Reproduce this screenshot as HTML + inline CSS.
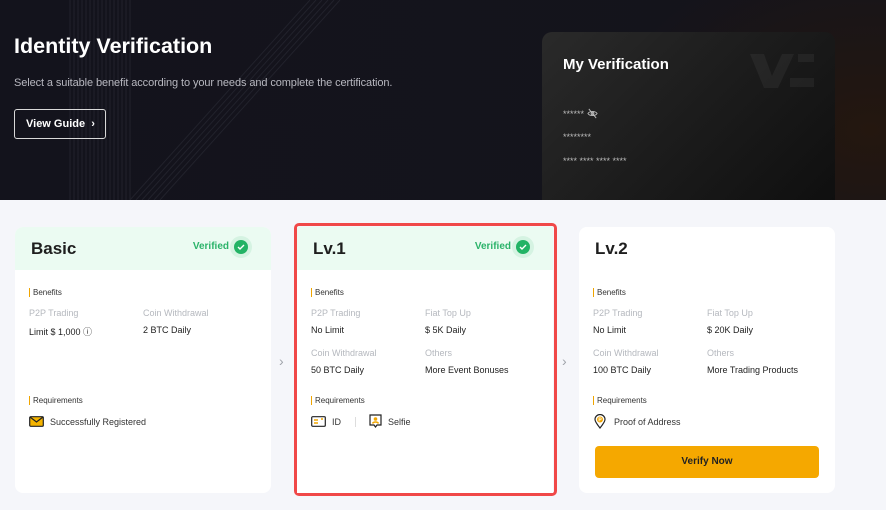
<!DOCTYPE html>
<html><head><meta charset="utf-8"><style>
*{margin:0;padding:0;box-sizing:border-box}
body{width:886px;height:510px;overflow:hidden;background:#f5f6fa;font-family:"Liberation Sans",sans-serif;position:relative}
.hdr{position:absolute;left:0;top:0;width:886px;height:200px;background:radial-gradient(ellipse 260px 180px at 870px 130px,#24170f 0%,rgba(20,18,24,0) 100%),linear-gradient(90deg,#13131c,#15141b);overflow:hidden}
.a{position:absolute}
.card{position:absolute;top:227px;width:256px;height:266px;background:#fff;border-radius:8px;overflow:hidden}
.top{height:43px;background:#ebfbf2;position:relative}
.top.w{background:#fff}
.ttl{position:absolute;left:16px;top:12px;font-size:17px;font-weight:bold;color:#1e1e1e}
.ver{position:absolute;right:42px;top:14px;font-size:10px;font-weight:bold;color:#2bb36a;white-space:nowrap}
.chk{position:absolute;right:19px;top:9px;width:22px;height:22px;border-radius:50%;background:#d5f3e2}
.chk:after{content:"";position:absolute;left:4px;top:4px;width:14px;height:14px;border-radius:50%;background:#22b365}
.chk svg{position:absolute;left:7px;top:8px;z-index:2}
.lab{position:absolute;font-size:8px;color:#333;border-left:1px solid #f0a500;padding-left:3px;line-height:9px}
.k{position:absolute;font-size:9px;color:#b5b8be}
.v{position:absolute;font-size:9px;color:#222}
.arr{position:absolute;top:353px;color:#a0a3aa;font-size:14px}
</style></head><body>
<div class="hdr">
 <svg class="a" style="left:0;top:0" width="886" height="200"><g stroke="#22222c" stroke-width="1">
 <line x1="70" y1="0" x2="70" y2="200"/><line x1="74" y1="0" x2="74" y2="200"/><line x1="78" y1="0" x2="78" y2="200"/><line x1="82" y1="0" x2="82" y2="200"/><line x1="86" y1="0" x2="86" y2="200"/><line x1="90" y1="0" x2="90" y2="200"/><line x1="94" y1="0" x2="94" y2="200"/><line x1="98" y1="0" x2="98" y2="200"/><line x1="102" y1="0" x2="102" y2="200"/><line x1="106" y1="0" x2="106" y2="200"/><line x1="110" y1="0" x2="110" y2="200"/><line x1="114" y1="0" x2="114" y2="200"/><line x1="118" y1="0" x2="118" y2="200"/><line x1="122" y1="0" x2="122" y2="200"/><line x1="126" y1="0" x2="126" y2="200"/><line x1="130" y1="0" x2="130" y2="200"/>
 <line x1="310" y1="0" x2="130" y2="200"/><line x1="316" y1="0" x2="136" y2="200"/><line x1="322" y1="0" x2="142" y2="200"/><line x1="328" y1="0" x2="148" y2="200"/><line x1="334" y1="0" x2="154" y2="200"/><line x1="340" y1="0" x2="160" y2="200"/>
 </g></svg>
 <div class="a" style="left:14px;top:34px;font-size:21.5px;font-weight:bold;color:#fff">Identity Verification</div>
 <div class="a" style="left:14px;top:77px;font-size:11px;color:#b8b8c0;letter-spacing:-0.1px">Select a suitable benefit according to your needs and complete the certification.</div>
 <div class="a" style="left:14px;top:109px;width:92px;height:30px;border:1px solid #d8d8d8;border-radius:3px;color:#fff;font-size:11px;font-weight:bold;padding:8px 0 0 11px">View Guide &nbsp;›</div>
 <div class="a" style="left:542px;top:32px;width:293px;height:170px;border-radius:10px 10px 0 0;background:linear-gradient(135deg,#2a2a2a 0%,#1c1c1c 50%,#0f0f0f 100%)">
  <svg class="a" style="left:208px;top:22px" width="64" height="36"><g fill="#fff" fill-opacity="0.05"><path d="M0 0h14l8 22 10-22h12L28 34H14z"/><rect x="48" y="0" width="16" height="8"/><rect x="40" y="24" width="24" height="9"/></g></svg>
  <div class="a" style="left:21px;top:24px;font-size:15px;font-weight:bold;color:#fff">My Verification</div>
  <div class="a" style="left:21px;top:76px;font-size:9px;color:#bbb">****** <svg width="11" height="11" viewBox="0 0 12 12" style="vertical-align:-2px"><path d="M1 6c2-3 8-3 10 0-2 3-8 3-10 0zM2 1l8 10" stroke="#bbb" fill="none"/><circle cx="6" cy="6" r="1.5" stroke="#bbb" fill="none"/></svg></div>
  <div class="a" style="left:21px;top:100px;font-size:9px;color:#bbb">********</div>
  <div class="a" style="left:21px;top:124px;font-size:9px;color:#bbb">**** **** **** ****</div>
 </div>
</div>

<div class="card" style="left:15px">
 <div class="top"><div class="ttl">Basic</div><div class="ver">Verified</div><div class="chk"><svg width="8" height="6"><path d="M1 3l2 2 4-4" stroke="#fff" stroke-width="1.4" fill="none"/></svg></div></div>
 <div class="lab" style="left:14px;top:61px">Benefits</div>
 <div class="k" style="left:14px;top:81px">P2P Trading</div><div class="v" style="left:14px;top:98px">Limit $ 1,000 ⓘ</div>
 <div class="k" style="left:128px;top:81px">Coin Withdrawal</div><div class="v" style="left:128px;top:98px">2 BTC Daily</div>
 <div class="lab" style="left:14px;top:169px">Requirements</div>
 <svg class="a" style="left:14px;top:189px" width="15" height="11"><rect x="0.7" y="0.7" width="13.6" height="9.6" rx="1" fill="#f5b400" stroke="#222" stroke-width="1.2"/><path d="M1 1l6.5 5 6.5-5" stroke="#222" stroke-width="1.2" fill="none"/></svg>
 <div class="v" style="left:35px;top:190px;color:#333">Successfully Registered</div>
</div>
<div class="arr" style="left:279px">›</div>

<div class="a" style="left:294px;top:223px;width:263px;height:273px;border:3px solid #f04848;border-radius:5px"></div>
<div class="card" style="left:297px;top:227px;border-radius:0">
 <div class="top"><div class="ttl">Lv.1</div><div class="ver">Verified</div><div class="chk"><svg width="8" height="6"><path d="M1 3l2 2 4-4" stroke="#fff" stroke-width="1.4" fill="none"/></svg></div></div>
 <div class="lab" style="left:14px;top:61px">Benefits</div>
 <div class="k" style="left:14px;top:81px">P2P Trading</div><div class="v" style="left:14px;top:98px">No Limit</div>
 <div class="k" style="left:128px;top:81px">Fiat Top Up</div><div class="v" style="left:128px;top:98px">$ 5K Daily</div>
 <div class="k" style="left:14px;top:121px">Coin Withdrawal</div><div class="v" style="left:14px;top:138px">50 BTC Daily</div>
 <div class="k" style="left:128px;top:121px">Others</div><div class="v" style="left:128px;top:138px">More Event Bonuses</div>
 <div class="lab" style="left:14px;top:169px">Requirements</div>
 <svg class="a" style="left:14px;top:189px" width="15" height="11"><rect x="0.7" y="0.7" width="13.6" height="9.6" rx="1" fill="#fff" stroke="#222" stroke-width="1.2"/><path d="M3 4h4M3 7h4M10 3h2" stroke="#f0a500" stroke-width="1.4"/></svg>
 <div class="v" style="left:35px;top:190px;color:#333">ID</div>
 <div class="a" style="left:58px;top:190px;width:1px;height:10px;background:#ddd"></div>
 <svg class="a" style="left:72px;top:187px" width="13" height="15"><path d="M1 1h11v10H8l-1.5 2L5 11H1z" fill="#fff" stroke="#222" stroke-width="1.2"/><circle cx="6.5" cy="5" r="1.8" fill="#f0a500"/><path d="M3.5 9.5c1-2 5-2 6 0" stroke="#f0a500" stroke-width="1.4" fill="none"/></svg>
 <div class="v" style="left:91px;top:190px;color:#333">Selfie</div>
</div>
<div class="arr" style="left:562px">›</div>

<div class="card" style="left:579px">
 <div class="top w"><div class="ttl">Lv.2</div></div>
 <div class="lab" style="left:14px;top:61px">Benefits</div>
 <div class="k" style="left:14px;top:81px">P2P Trading</div><div class="v" style="left:14px;top:98px">No Limit</div>
 <div class="k" style="left:128px;top:81px">Fiat Top Up</div><div class="v" style="left:128px;top:98px">$ 20K Daily</div>
 <div class="k" style="left:14px;top:121px">Coin Withdrawal</div><div class="v" style="left:14px;top:138px">100 BTC Daily</div>
 <div class="k" style="left:128px;top:121px">Others</div><div class="v" style="left:128px;top:138px">More Trading Products</div>
 <div class="lab" style="left:14px;top:169px">Requirements</div>
 <svg class="a" style="left:15px;top:187px" width="12" height="15"><path d="M6 14C2 9 1 7 1 5.5a5 5 0 0110 0C11 7 10 9 6 14z" fill="#fff" stroke="#222" stroke-width="1.2"/><circle cx="6" cy="5.5" r="3" fill="#f0a500"/><text x="4.4" y="7.5" font-size="5" fill="#fff" font-family="Liberation Sans" font-weight="bold">P</text></svg>
 <div class="v" style="left:35px;top:190px;color:#333">Proof of Address</div>
 <div class="a" style="left:16px;top:219px;width:224px;height:32px;background:#f5a800;border-radius:4px;font-size:10px;font-weight:bold;color:#222;text-align:center;line-height:32px">Verify Now</div>
</div>
</body></html>
